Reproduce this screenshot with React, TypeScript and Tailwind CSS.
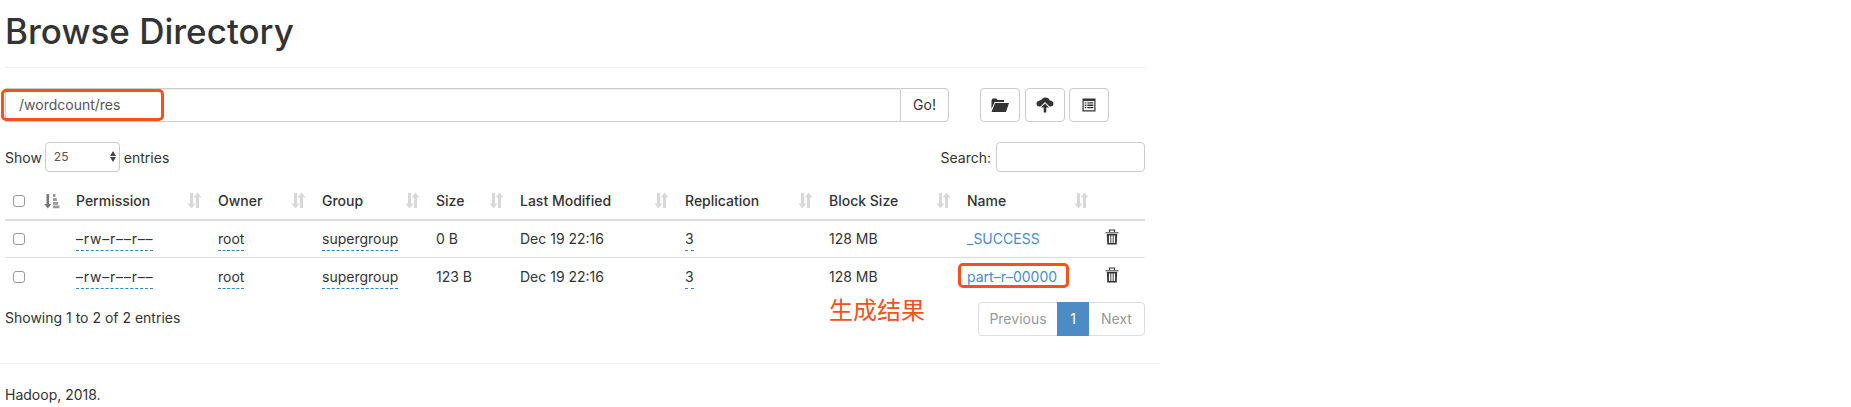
import React from "react";

const SortIcon = ({ className }: { className: string }) => (
  <svg width="15" height="17" viewBox="0 0 15 17" className={className}>
    <path d="M3 1h3v10.500h2.500L4.500 16.500.5 11.500H3z" fill="currentColor" />
    <path d="M10.500 0.500 14.500 5.500H12V16H9V5.500H6.500z" fill="currentColor" />
  </svg>
);

const SortActive = () => (
  <svg width="16" height="16" viewBox="0 0 16 16" className="text-[#777]">
    <path d="M2.500 1h2.600v10h2.300L3.800 15.500.2 11h2.300z" fill="currentColor" />
    <path d="M9 1h2.500v3H9zM9 5h3.800v3H9zM9 9h5v2.800H9zM9 12.500h6.500v2.800H9z" fill="#999" />
  </svg>
);

const Trash = () => (
  <svg width="14" height="16" viewBox="0 0 14 16" className="text-[#333] -mt-[3px]">
    <path d="M4.500 3V1h5v2" fill="none" stroke="currentColor" strokeWidth="1.200" />
    <path d="M.5 3h13v1.500H.5z" fill="#777" />
    <path
      d="M1.800 5h10.400l-.5 10.500H2.300zM3.900 6.500v7.500h1.500V6.500zM6.300 6.500v7.500h1.400V6.500zM8.600 6.500v7.500h1.500V6.500z"
      fill="currentColor"
      fillRule="evenodd"
    />
  </svg>
);

const FolderOpen = () => (
  <svg width="18" height="14" viewBox="0 0 18 14" className="text-[#333]">
    <path d="M0.500 2.500 1.500 .5h4l1 1.500h6.500v2H3.500L.5 11z" fill="currentColor" />
    <path d="M4 5h14l-3 9H0.500z" fill="currentColor" />
  </svg>
);

const CloudUpload = () => (
  <svg width="18" height="16" viewBox="0 0 18 16" className="text-[#333]">
    <path
      d="M9.500 .5c2.200 0 3.700 1.300 4.300 3 2.200.1 3.700 1.500 3.700 3.300 0 1.600-1.200 2.700-2.700 2.700h-1.300L9 5 4.500 9.500H3.200C1.500 9.500.5 8.300.5 6.800c0-1.500 1-2.500 2.500-2.700C3.500 3.200 4.400 2.800 5.300 3 6 1.500 7.500.5 9.500.5z"
      fill="currentColor"
    />
    <path d="M9 6.500 13 10.500H10.300V15.500H7.700V10.500H5z" fill="currentColor" />
  </svg>
);

const ListAlt = () => (
  <svg width="14" height="14" viewBox="0 0 14 14" className="text-[#333]">
    <path
      d="M0.500 0.500h13v13h-13zM1.700 3v9.300h10.600V3zM2.800 4.200h1.500v1.300H2.800zM5.300 4.200h6v1.300h-6zM2.800 6.600h1.500v1.300H2.800zM5.300 6.600h6v1.300h-6zM2.800 9h1.500v1.300H2.800zM5.300 9h6v1.300h-6z"
      fill="currentColor"
      fillRule="evenodd"
    />
  </svg>
);

const headers = [
  { label: "Permission", width: "w-[142px]" },
  { label: "Owner", width: "w-[104px]" },
  { label: "Group", width: "w-[114px]" },
  { label: "Size", width: "w-[84px]" },
  { label: "Last Modified", width: "w-[165px]" },
  { label: "Replication", width: "w-[144px]" },
  { label: "Block Size", width: "w-[138px]" },
  { label: "Name", width: "w-[138px]" },
];

const rows = [
  { size: "0 B", name: "_SUCCESS" },
  { size: "123 B", name: "part–r–00000" },
];

const Tip = ({ children }: { children: React.ReactNode }) => (
  <span className="border-b border-dashed border-[#2f86d0] pb-[3px]">{children}</span>
);

const Checkbox = () => (
  <span className="block w-[12px] h-[12px] rounded-[3px] border border-[#999] bg-white ml-[8px]" />
);

export default function App() {
  return (
    <div className="w-[1851px] h-[407px] overflow-hidden bg-white text-[#333] text-[14px] font-['Inter','Liberation_Sans',sans-serif]">
      <div className="w-[1160px]">
        <div className="ml-[5px] w-[1140px]">
          <h1 className="pt-[9px] h-[68px] text-[35px] leading-[44px] font-medium border-b border-[#eee]">
            Browse Directory
          </h1>

          <div className="flex mt-[20px] h-[34px]">
            <div className="relative flex w-[944px]">
              <div className="flex-1 border border-[#ccc] border-r-0 pl-[13px] leading-[32px] text-[#555] shadow-[inset_0_1px_1px_rgba(0,0,0,0.075)]">
                /wordcount/res
              </div>
              <div className="w-[49px] border border-[#ccc] rounded-r-[4px] text-center leading-[32px]">Go!</div>
              <div className="absolute left-[-4px] top-[1px] w-[163px] h-[32px] border-[3px] border-[#f4511e] rounded-[5px]" />
            </div>
            <div className="flex ml-[31px]">
              <div className="w-[40px] border border-[#ccc] rounded-[4px] flex items-center justify-center">
                <FolderOpen />
              </div>
              <div className="w-[40px] ml-[5px] border border-[#ccc] rounded-[4px] flex items-center justify-center">
                <CloudUpload />
              </div>
              <div className="w-[40px] ml-[4px] border border-[#ccc] rounded-[4px] flex items-center justify-center">
                <ListAlt />
              </div>
            </div>
          </div>

          <div className="flex justify-between items-center mt-[20px] h-[30px]">
            <div className="flex items-center">
              <span>Show</span>
              <div className="relative w-[75px] h-[30px] ml-[3px] mr-[4px] border border-[#ccc] rounded-[4px] pl-[8px] text-[12px] leading-[28px] text-[#555]">
                25
                <span className="absolute right-[3px] top-[8px] flex flex-col gap-[1px]">
                  <span className="w-0 h-0 border-x-[3px] border-x-transparent border-b-[5px] border-b-[#444]" />
                  <span className="w-0 h-0 border-x-[3px] border-x-transparent border-t-[5px] border-t-[#444]" />
                </span>
              </div>
              <span>entries</span>
            </div>
            <div className="flex items-center">
              <span>Search:</span>
              <div className="w-[149px] h-[30px] ml-[5px] border border-[#ccc] rounded-[4px]" />
            </div>
          </div>

          <table className="mt-[10px] border-collapse table-fixed w-[1140px]">
            <thead>
              <tr className="h-[38px] border-b-[2px] border-[#ddd]">
                <th className="w-[30px] p-0">
                  <Checkbox />
                </th>
                <th className="w-[41px] p-0 text-left">
                  <span className="flex pl-[9px]">
                    <SortActive />
                  </span>
                </th>
                {headers.map((h) => (
                  <th key={h.label} className={`${h.width} p-0 text-left font-medium`}>
                    <span className="flex items-center justify-between pr-[16px]">
                      {h.label}
                      <SortIcon className="text-[#d8d8d8]" />
                    </span>
                  </th>
                ))}
                <th className="p-0" />
              </tr>
            </thead>
            <tbody>
              {rows.map((r) => (
                <tr key={r.name} className="h-[37px] border-b border-[#ddd] last:border-b-0 last:h-[39px]">
                  <td className="p-0">
                    <Checkbox />
                  </td>
                  <td className="p-0" />
                  <td className="p-0">
                    <Tip>
                      <span className="tracking-[0.8px]">–rw–r––r––</span>
                    </Tip>
                  </td>
                  <td className="p-0">
                    <Tip>root</Tip>
                  </td>
                  <td className="p-0">
                    <Tip>supergroup</Tip>
                  </td>
                  <td className="p-0">{r.size}</td>
                  <td className="p-0">Dec 19 22:16</td>
                  <td className="p-0">
                    <Tip>3</Tip>
                  </td>
                  <td className="p-0">128 MB</td>
                  <td className="p-0 text-[#4a8cc9]">
                    <span className="relative">
                      {r.name}
                      {r.name !== "_SUCCESS" && (
                        <span className="absolute left-[-9px] top-[-5px] w-[111px] h-[25px] border-[3px] border-[#f4511e] rounded-[5px]" />
                      )}
                    </span>
                  </td>
                  <td className="p-0">
                    <Trash />
                  </td>
                </tr>
              ))}
            </tbody>
          </table>

          <div className="relative flex justify-between mt-[6px] h-[34px]">
            <span className="leading-[20px] mt-[6px]">Showing 1 to 2 of 2 entries</span>
            <span className="absolute left-[824px] top-[-10px] text-[24px] leading-[34px] text-[#f4511e] font-['Noto_Sans_CJK_SC',sans-serif]">
              生成结果
            </span>
            <div className="flex h-[34px] border border-[#ddd] rounded-[4px] text-[#999]">
              <span className="w-[78px] text-center leading-[32px]">Previous</span>
              <span className="w-[32px] -my-px h-[34px] bg-[#4e8ac4] text-white text-center leading-[34px]">1</span>
              <span className="w-[55px] text-center leading-[32px]">Next</span>
            </div>
          </div>
        </div>

        <div className="mt-[27px] h-[44px] border-t border-[#eee] pl-[5px] pt-[21px] leading-[20px]">Hadoop, 2018.</div>
      </div>
    </div>
  );
}
